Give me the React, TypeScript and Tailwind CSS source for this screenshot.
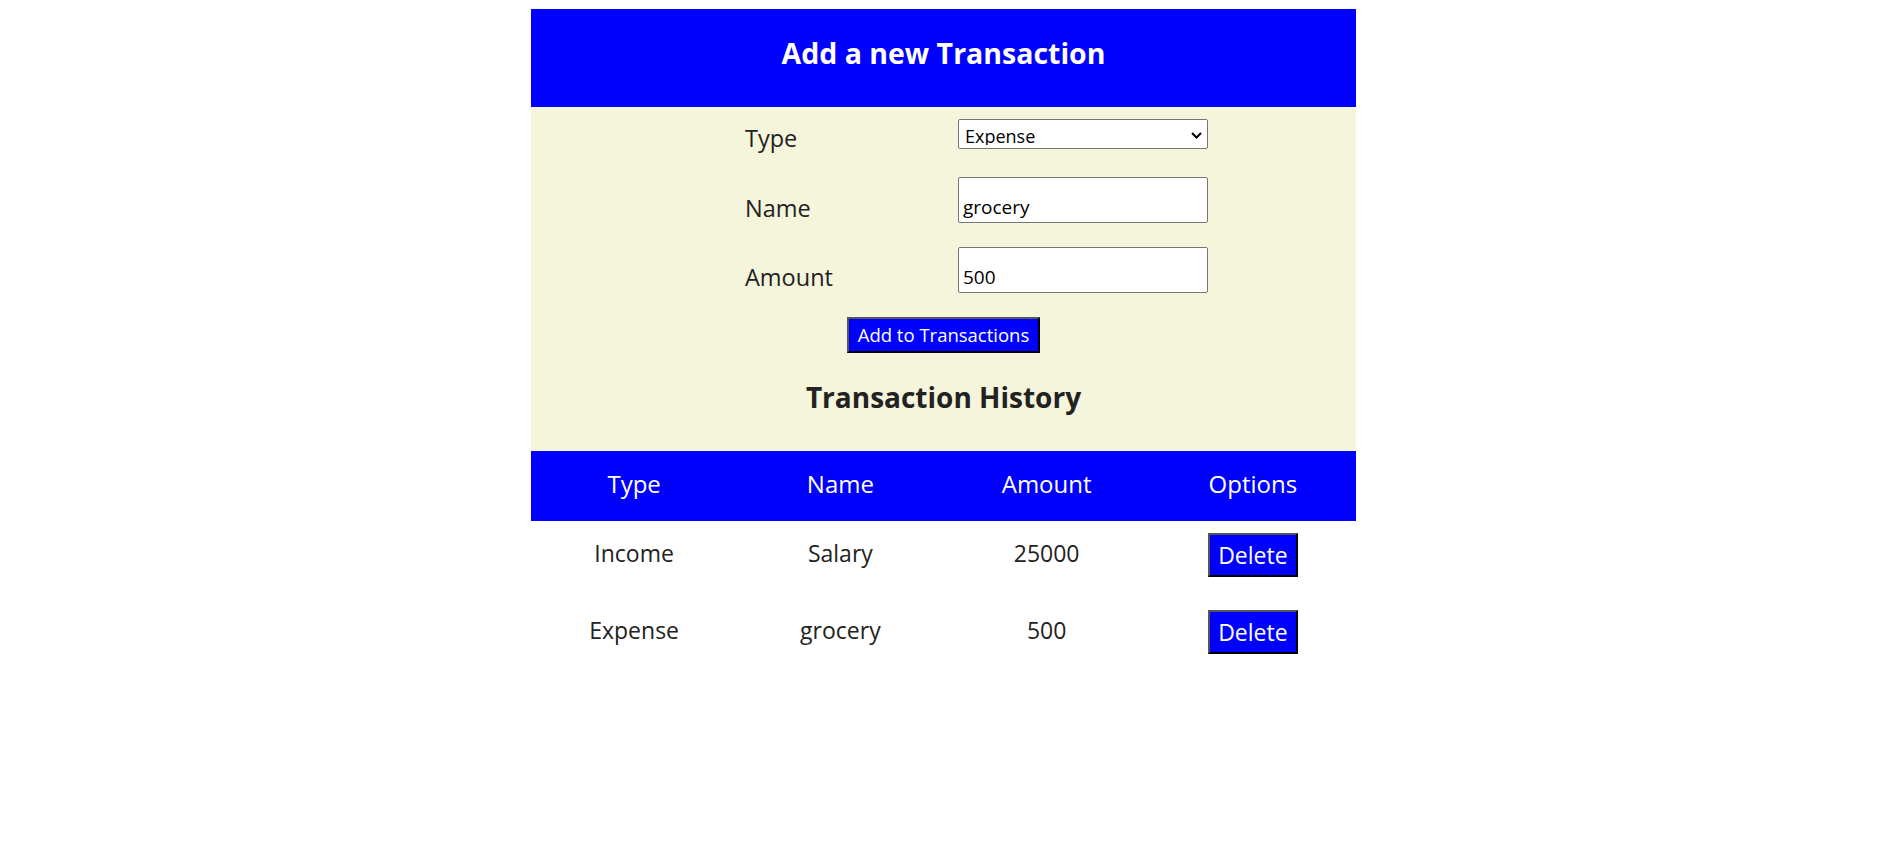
import { useState } from "react";

type Txn = { id: number; type: string; name: string; amount: number };

export default function App() {
  const [type, setType] = useState("Expense");
  const [name, setName] = useState("grocery");
  const [amount, setAmount] = useState("500");
  const [txns, setTxns] = useState<Txn[]>([
    { id: 1, type: "Income", name: "Salary", amount: 25000 },
    { id: 2, type: "Expense", name: "grocery", amount: 500 },
  ]);

  const addTxn = () => {
    if (!name || !amount) return;
    setTxns([...txns, { id: Date.now(), type, name, amount: Number(amount) }]);
  };

  const deleteTxn = (id: number) => {
    setTxns(txns.filter((t) => t.id !== id));
  };

  return (
    <div className="min-h-screen bg-white font-['Open_Sans','Segoe_UI',sans-serif] text-[#222]">
      <div className="mx-auto mt-[9px] w-[825px]">
        <div className="flex h-[98px] items-center justify-center bg-[#0000ff] pb-[10px]">
          <h1 className="text-[28.5px] font-bold leading-none text-white">Add a new Transaction</h1>
        </div>

        <div className="bg-[#f5f5dc] pt-[12px] pb-[40px]">
          <div className="pl-[214px]">
            <div className="flex h-[58px] items-start">
              <label htmlFor="type" className="mt-[8px] w-[213px] text-[23.5px] leading-none">Type</label>
              <div className="relative w-[250px]">
                <select
                  id="type"
                  value={type}
                  onChange={(e) => setType(e.target.value)}
                  className="h-[30px] w-full appearance-none rounded-[2px] border border-[#767676] bg-white pl-[6px] pt-[3px] text-[18px] leading-none text-black"
                >
                  <option value="Income">Income</option>
                  <option value="Expense">Expense</option>
                </select>
                <svg className="pointer-events-none absolute right-[6px] top-[13px]" width="11" height="7" viewBox="0 0 11 7" fill="none">
                  <path d="M1 1l4.5 4.5L10 1" stroke="#000" strokeWidth="2" />
                </svg>
              </div>
            </div>
            <div className="flex h-[70px] items-start">
              <label htmlFor="name" className="mt-[20px] w-[213px] text-[23.5px] leading-none">Name</label>
              <input
                id="name"
                value={name}
                onChange={(e) => setName(e.target.value)}
                className="h-[46px] w-[250px] rounded-[2px] border border-[#767676] bg-white px-[4px] pt-[14px] text-[19px] text-black outline-none"
              />
            </div>
            <div className="flex h-[70px] items-start">
              <label htmlFor="amount" className="mt-[19px] w-[213px] text-[23.5px] leading-none">Amount</label>
              <input
                id="amount"
                value={amount}
                onChange={(e) => setAmount(e.target.value)}
                className="h-[46px] w-[250px] rounded-[2px] border border-[#767676] bg-white px-[4px] pt-[14px] text-[19px] text-black outline-none"
              />
            </div>
          </div>
          <div className="flex justify-center">
            <button
              onClick={addTxn}
              className="h-[36px] w-[193px] border-2 border-t-[#555] border-l-[#555] border-b-black border-r-black bg-[#0000ff] text-[18.5px] leading-none text-white"
            >
              Add to Transactions
            </button>
          </div>
          <h2 className="mt-[30px] text-center text-[28px] font-bold leading-none">Transaction History</h2>
        </div>

        <div className="grid h-[70px] grid-cols-4 items-center bg-[#0000ff] pb-[5px] text-center text-[24px] leading-none text-white">
          <div>Type</div>
          <div>Name</div>
          <div>Amount</div>
          <div>Options</div>
        </div>

        {txns.map((t) => (
          <div key={t.id} className="grid grid-cols-4 items-center pt-[12px] pb-[21px] text-center text-[23px] leading-none">
            <div className="pb-[4px]">{t.type}</div>
            <div className="pb-[4px]">{t.name}</div>
            <div className="pb-[4px]">{t.amount}</div>
            <div className="flex justify-center">
              <button
                onClick={() => deleteTxn(t.id)}
                className="h-[44px] w-[90px] border-2 border-t-[#555] border-l-[#555] border-b-black border-r-black bg-[#0000ff] text-[23px] leading-none text-white"
              >
                Delete
              </button>
            </div>
          </div>
        ))}
      </div>
    </div>
  );
}
